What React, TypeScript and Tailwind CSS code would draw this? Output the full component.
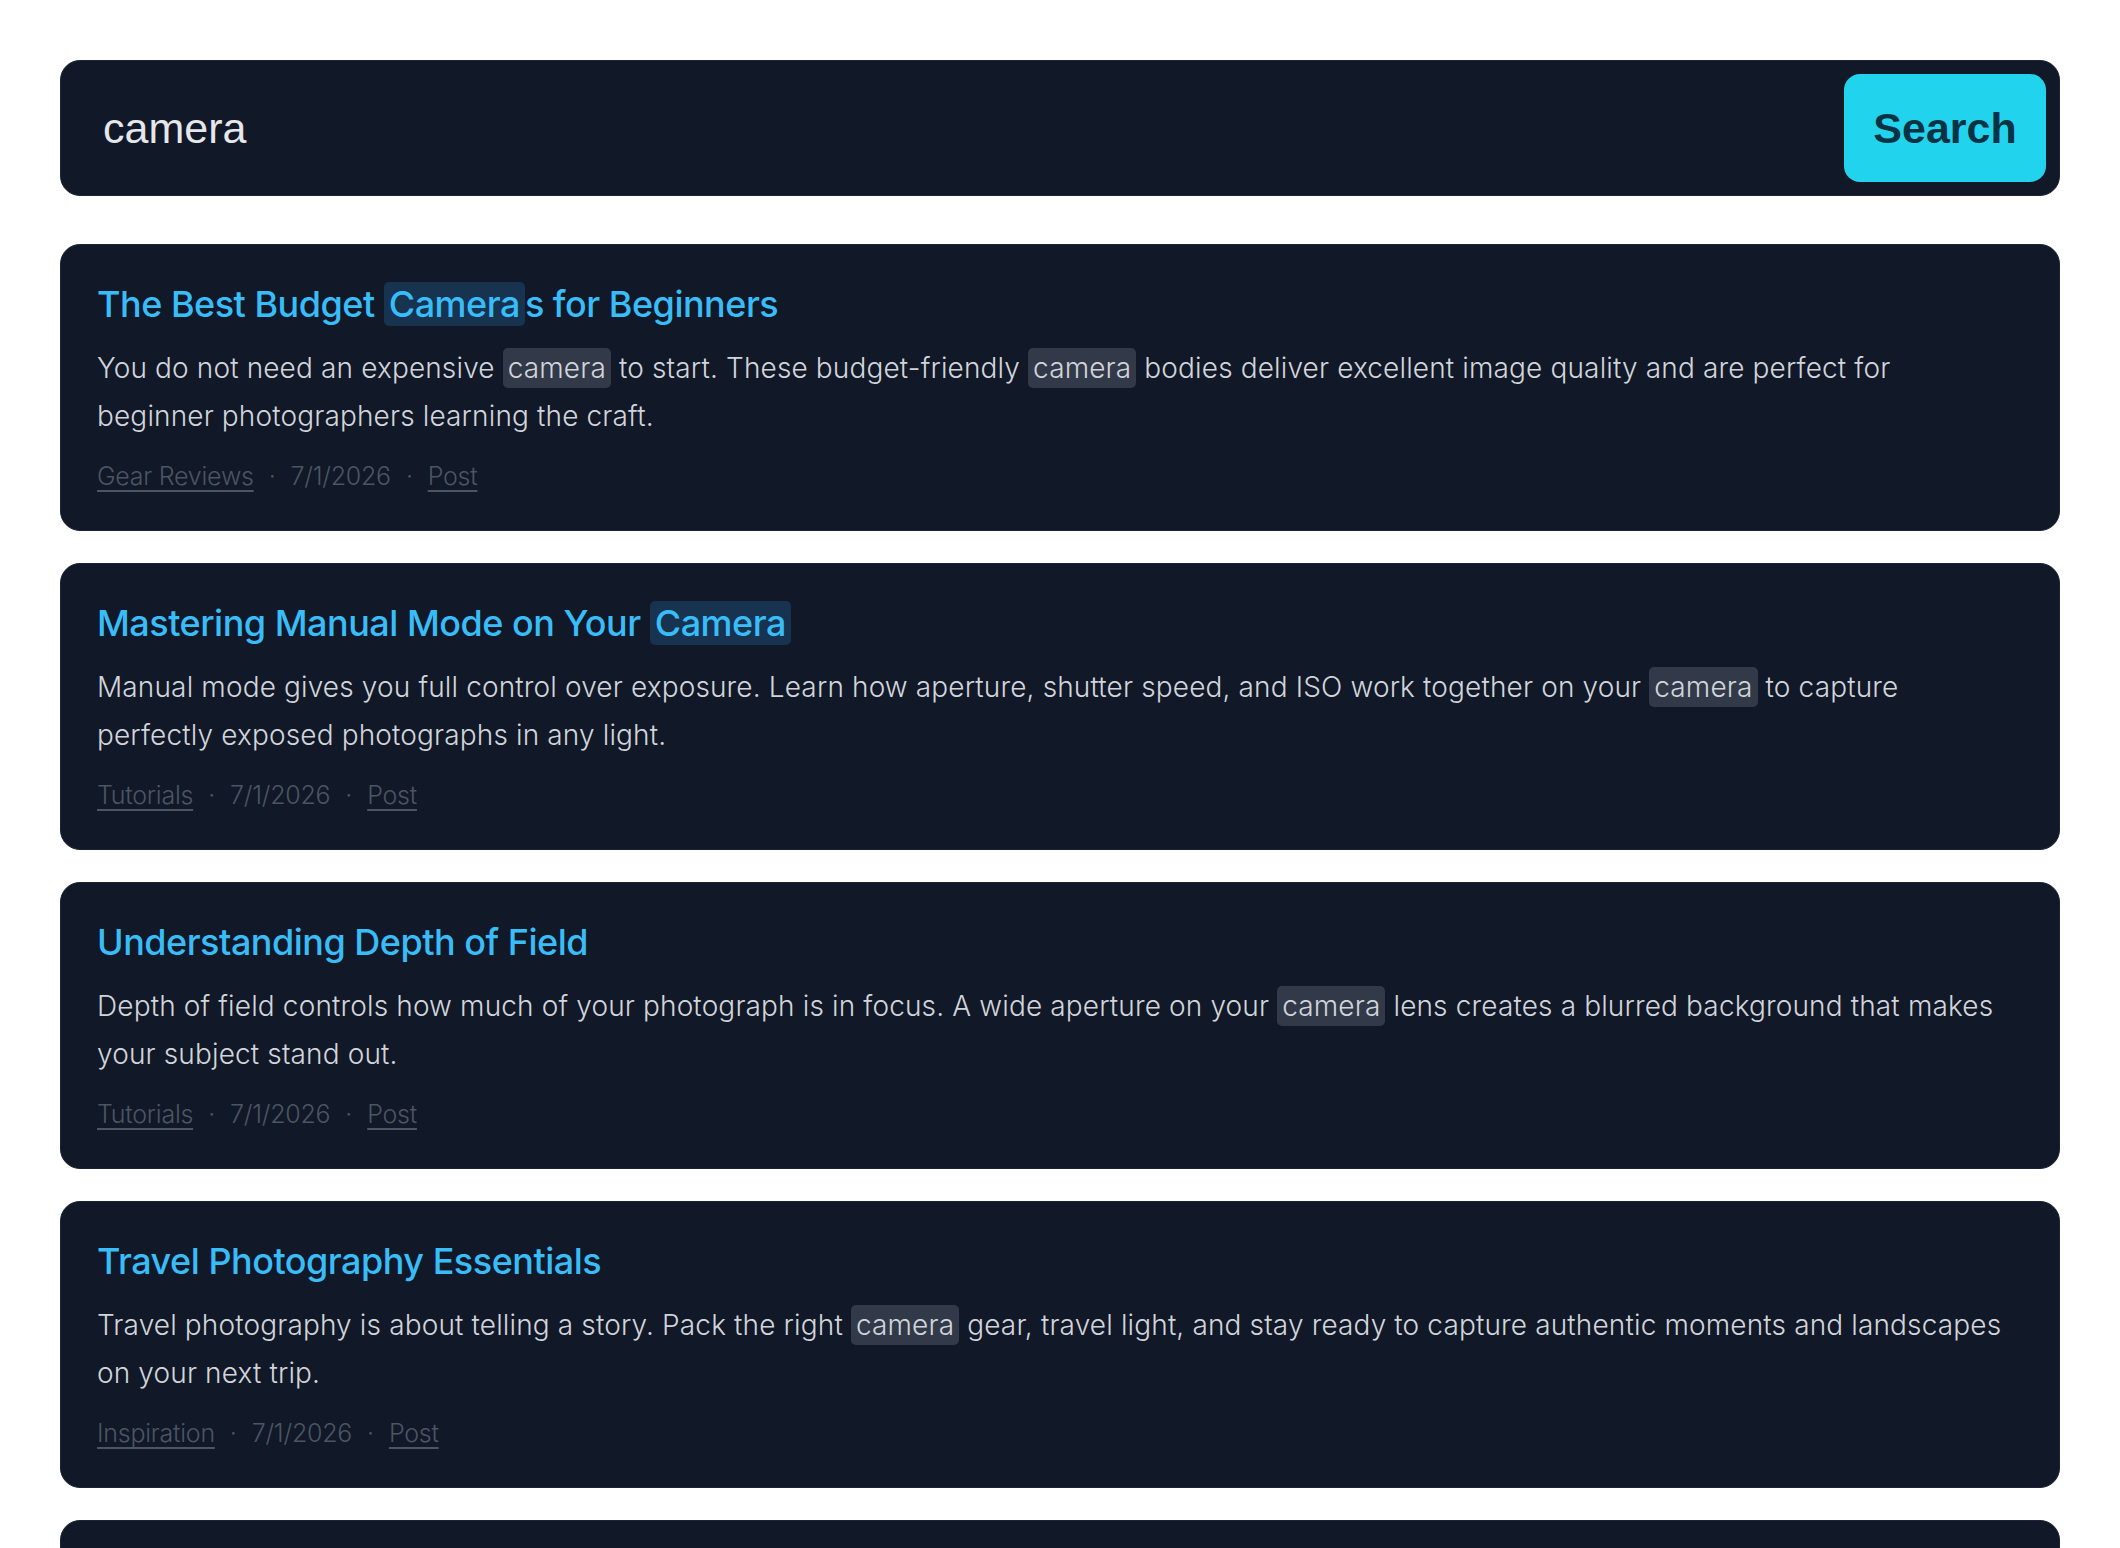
import React, { useState } from "react";

/* ---------------- Data ---------------- */

interface Post {
  id: number;
  title: string;
  excerpt: string;
  category: string;
  date: string;
  kind: string;
}

const POSTS: Post[] = [
  {
    id: 1,
    title: "The Best Budget Cameras for Beginners",
    excerpt:
      "You do not need an expensive camera to start. These budget-friendly camera bodies deliver excellent image quality and are perfect for beginner photographers learning the craft.",
    category: "Gear Reviews",
    date: "7/1/2026",
    kind: "Post",
  },
  {
    id: 2,
    title: "Mastering Manual Mode on Your Camera",
    excerpt:
      "Manual mode gives you full control over exposure. Learn how aperture, shutter speed, and ISO work together on your camera to capture perfectly exposed photographs in any light.",
    category: "Tutorials",
    date: "7/1/2026",
    kind: "Post",
  },
  {
    id: 3,
    title: "Understanding Depth of Field",
    excerpt:
      "Depth of field controls how much of your photograph is in focus. A wide aperture on your camera lens creates a blurred background that makes your subject stand out.",
    category: "Tutorials",
    date: "7/1/2026",
    kind: "Post",
  },
  {
    id: 4,
    title: "Travel Photography Essentials",
    excerpt:
      "Travel photography is about telling a story. Pack the right camera gear, travel light, and stay ready to capture authentic moments and landscapes on your next trip.",
    category: "Inspiration",
    date: "7/1/2026",
    kind: "Post",
  },
  {
    id: 5,
    title: "Cleaning and Caring for Your Camera",
    excerpt:
      "A little routine maintenance keeps your camera working for years. Here is how to clean the sensor, lenses and body without causing damage.",
    category: "Gear Reviews",
    date: "7/1/2026",
    kind: "Post",
  },
];

/* ---------------- Highlight ---------------- */

// splits text on the query and wraps every hit in a <mark>
const Highlight: React.FC<{ text: string; query: string; markClass: string }> = ({
  text,
  query,
  markClass,
}) => {
  const q = query.trim();
  if (!q) return <>{text}</>;

  const escaped = q.replace(/[.*+?^${}()|[\]\\]/g, "\\$&");
  const parts = text.split(new RegExp(`(${escaped})`, "gi"));

  return (
    <>
      {parts.map((part, i) =>
        part.toLowerCase() === q.toLowerCase() ? (
          <mark key={i} className={markClass}>
            {part}
          </mark>
        ) : (
          <React.Fragment key={i}>{part}</React.Fragment>
        )
      )}
    </>
  );
};

/* ---------------- Result card ---------------- */

const ResultCard: React.FC<{ post: Post; query: string }> = ({ post, query }) => (
  <article className="rounded-[20px] border border-[#1c2433] bg-[#111827] p-9 font-['Inter',sans-serif]">
    <h2 className="text-[36px] leading-[47px] font-medium tracking-[-0.014em] text-[#38bdf8]">
      <Highlight
        text={post.title}
        query={query}
        markClass="rounded-[5px] bg-[#173350] px-[5px] text-[#38bdf8]"
      />
    </h2>

    <p className="mt-4 pr-[14px] text-[28px] leading-[48px] font-light tracking-[0.005em] text-[#d1d5db]">
      <Highlight
        text={post.excerpt}
        query={query}
        markClass="rounded-[5px] bg-[#323a4a] px-[5px] py-[3px] text-[#d1d5db]"
      />
    </p>

    <div className="mt-[18px] flex items-center text-[25px] leading-[36px] font-light tracking-[-0.01em] text-[#4b5563]">
      <a href="#" className="underline underline-offset-[5px]">
        {post.category}
      </a>
      <span className="mx-[15px]">·</span>
      <span>{post.date}</span>
      <span className="mx-[15px]">·</span>
      <a href="#" className="underline underline-offset-[5px]">
        {post.kind}
      </a>
    </div>
  </article>
);

/* ---------------- Page ---------------- */

export default function App() {
  const [query, setQuery] = useState("camera");

  const results = POSTS.filter(
    (p) =>
      p.title.toLowerCase().includes(query.toLowerCase()) ||
      p.excerpt.toLowerCase().includes(query.toLowerCase())
  );

  return (
    <div className="min-h-screen bg-white px-[60px] pt-[60px] pb-16">
      {/* Search bar */}
      <form
        onSubmit={(e) => e.preventDefault()}
        className="flex h-[136px] items-center rounded-[20px] border border-[#1c2433] bg-[#111827] py-[13px] pr-[13px] pl-[42px]"
      >
        <input
          value={query}
          onChange={(e) => setQuery(e.target.value)}
          className="min-w-0 flex-1 bg-transparent font-['Liberation_Sans',Arial,sans-serif] text-[43px] text-[#e5e7eb] outline-none"
        />
        <button
          type="submit"
          className="h-[108px] w-[202px] rounded-[16px] bg-[#22d3ee] font-['Liberation_Sans',Arial,sans-serif] text-[43px] font-bold text-[#083344]"
        >
          Search
        </button>
      </form>

      {/* Results */}
      <div className="mt-12 flex flex-col gap-8">
        {results.map((post) => (
          <ResultCard key={post.id} post={post} query={query} />
        ))}
      </div>
    </div>
  );
}
